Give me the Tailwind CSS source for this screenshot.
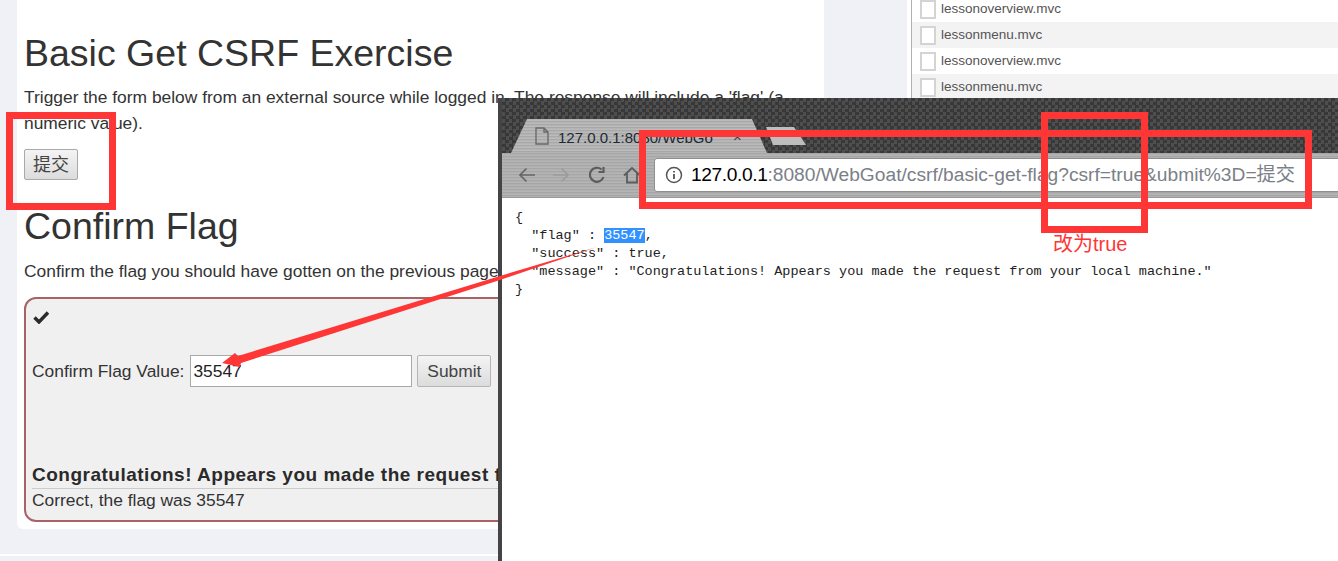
<!DOCTYPE html>
<html lang="en">
<head>
  <meta charset="UTF-8" />
  <title>Basic Get CSRF Exercise</title>
  <script src="https://cdn.jsdelivr.net/npm/@tailwindcss/browser@4"></script>
</head>
<body class="relative w-[1338px] h-[561px] overflow-hidden bg-[#eff1f7] text-[#333] font-['Liberation_Sans','Noto_Sans_CJK_SC',sans-serif]">

  <!-- lesson page -->
  <div class="h-[554px] pl-[17px] flex items-start">
    <main class="w-[807px] h-[529px] bg-white rounded-b-md pl-[7px] pt-[33px]">
      <h1 class="text-[37.5px] leading-[41px] font-normal">Basic Get CSRF Exercise</h1>
      <p class="mt-[10px] text-[17.4px] leading-[26px] w-[770px] text-[#333]">Trigger the form below from an external source while logged in. The response will include a 'flag' (a numeric value).</p>
      <button class="mt-[13px] block w-[54px] h-[31px] border border-[#a9a9a9] rounded-[2px] bg-gradient-to-b from-[#f4f4f4] to-[#dcdcdc] text-[18px] leading-none text-[#444]">提交</button>
      <h2 class="mt-[26px] text-[37.5px] leading-[41px] font-normal">Confirm Flag</h2>
      <p class="mt-[13px] text-[17.4px] leading-[22px] whitespace-nowrap">Confirm the flag you should have gotten on the previous page above.</p>
      <section class="mt-[15px] w-[776px] h-[225px] border-2 border-[#a96266] rounded-[12px] bg-[#f0f0f0] pl-[6px]">
        <svg class="mt-[11px] ml-[1px]" width="17" height="14" viewBox="0 0 17 14"><path d="M1.5 7.5 L6 12 L15 2.5" fill="none" stroke="#2a2a2a" stroke-width="3.4"/></svg>
        <div class="mt-[31px] flex items-center h-[32px]">
          <label class="text-[17.4px] whitespace-nowrap">Confirm Flag Value:</label>
          <input class="ml-[6px] w-[222px] h-[32px] border border-[#a9a9a9] bg-white px-[2px] text-[17.4px] text-[#222]" value="35547" />
          <button class="ml-[5px] w-[74px] h-[32px] border border-[#b5b5b5] rounded-[2px] bg-gradient-to-b from-[#f4f4f4] to-[#dcdcdc] text-[17.4px] text-[#444]">Submit</button>
        </div>
        <p class="mt-[77px] text-[19px] leading-[22px] font-bold tracking-[0.5px] text-[#2a2a2a] whitespace-nowrap">Congratulations! Appears you made the request from your local machine.</p>
        <p class="mt-[2px] border-t border-[#cccccc] text-[17.4px] leading-[23px]">Correct, the flag was 35547</p>
      </section>
    </main>

    <!-- devtools network list behind the browser -->
    <aside class="ml-[83px] pl-[4px] bg-white w-[431px] h-[98px]">
      <ul class="h-full border-l border-[#b0b0b0] text-[13.5px] text-[#555] overflow-hidden">
        <li class="-mt-[4px] h-[26px] pl-[8px] flex items-center gap-[5px] pt-[1px]"><span class="w-[16px] h-[19px] border-2 border-[#d4d4d4] bg-white"></span>lessonoverview.mvc</li>
        <li class="h-[26px] pl-[8px] flex items-center gap-[5px] pt-[1px] bg-[#f3f3f3]"><span class="w-[16px] h-[19px] border-2 border-[#d4d4d4] bg-white"></span>lessonmenu.mvc</li>
        <li class="h-[26px] pl-[8px] flex items-center gap-[5px] pt-[1px]"><span class="w-[16px] h-[19px] border-2 border-[#d4d4d4] bg-white"></span>lessonoverview.mvc</li>
        <li class="h-[26px] pl-[8px] flex items-center gap-[5px] pt-[1px] bg-[#f3f3f3]"><span class="w-[16px] h-[19px] border-2 border-[#d4d4d4] bg-white"></span>lessonmenu.mvc</li>
      </ul>
    </aside>
  </div>
  <div class="h-[2px] bg-white"></div>

  <!-- browser window on top -->
  <div class="absolute left-[498px] top-[98px] w-[840px] h-[463px] border-l-[4px] border-[#444] flex flex-col bg-white">
    <div class="relative h-[55px] shrink-0 bg-[repeating-conic-gradient(#383838_0_25%,#4e4e4e_0_50%)] bg-[length:7px_7px]">
      <div class="absolute left-[9px] top-[21px] w-[256px] h-[34px] [clip-path:polygon(16px_0,241px_0,100%_100%,0_100%)] bg-[repeating-linear-gradient(0deg,#b4b4b4_0_1px,#a8a8a8_1px_2px,#bababa_2px_3px)] text-[15px] text-[#1d2a33]">
        <svg class="absolute left-[24px] top-[8px]" width="14" height="18" viewBox="0 0 14 18"><path d="M1 1 H9 L13 5 V17 H1 Z M9 1 V5 H13" fill="none" stroke="#6a6a6a" stroke-width="1.4"/></svg>
        <span class="absolute left-[47px] top-[8px] whitespace-nowrap">127.0.0.1:8080/WebGo</span>
        <span class="absolute left-[222px] top-[7px] text-[#444]">×</span>
      </div>
      <div class="absolute left-[264px] top-[29px] w-[40px] h-[18px] [clip-path:polygon(0_0,28px_0,100%_100%,7px_100%)] bg-[#bdbdbd]"></div>
    </div>
    <div class="relative h-[45px] shrink-0 bg-[repeating-linear-gradient(0deg,#b0b0b0_0_1px,#a6a6a6_1px_2px,#b4b4b4_2px_3px)] border-b border-[#9a9a9a] flex items-center pl-[16px]">
      <svg class="shrink-0" width="17" height="16" viewBox="0 0 17 16" fill="none" stroke="#666" stroke-width="1.7"><path d="M17 8 H2 M8.5 1.5 L2 8 L8.5 14.5"/></svg>
      <svg class="ml-[18px] shrink-0" width="17" height="16" viewBox="0 0 17 16" fill="none" stroke="#9c9c9c" stroke-width="1.7"><path d="M0 8 H15 M8.5 1.5 L15 8 L8.5 14.5"/></svg>
      <svg class="ml-[18px] shrink-0" width="18" height="18" viewBox="0 0 18 18" fill="none" stroke="#5c5c5c" stroke-width="2.2"><path d="M15.5 11 A7 7 0 1 1 13.5 3.5 M15.5 1 V6 H10.5"/></svg>
      <svg class="ml-[17px] shrink-0" width="18" height="18" viewBox="0 0 18 18" fill="none" stroke="#5c5c5c" stroke-width="1.8"><path d="M1 9.5 L9 2 L17 9.5 M4 7.5 V16.5 H14 V7.5"/></svg>
      <div class="ml-[13px] w-[700px] shrink-0 h-[34px] bg-white rounded-l-[3px] border border-[#8f8f8f] flex items-center pl-[10px] text-[19.2px] whitespace-nowrap text-[#7b8087]">
        <svg class="shrink-0" width="18" height="18" viewBox="0 0 18 18" fill="none" stroke="#555"><circle cx="9" cy="9" r="7.5" stroke-width="1.5"/><path d="M9 8 V13 M9 5 V6.5" stroke-width="1.8"/></svg>
        <span class="ml-[8px] text-black tracking-[-0.4px]">127.0.0.1</span><span>:8080/WebGoat/csrf/basic-get-flag?csrf=true&amp;ubmit%3D=提交</span>
      </div>
    </div>
    <pre class="pl-[13px] pt-[11px] font-['Liberation_Mono','Noto_Sans_CJK_SC',monospace] text-[13.5px] leading-[18px] text-[#222]">{
  "flag" : <span class="bg-[#3390ff] text-white">35547</span>,
  "success" : true,
  "message" : "Congratulations! Appears you made the request from your local machine."
}</pre>
  </div>

  <!-- red annotations -->
  <div class="absolute left-[6px] top-[112px] w-[110px] h-[98px] border-[7px] border-[#ff3636]"></div>
  <div class="absolute left-[639px] top-[130px] w-[673px] h-[79px] border-[7px] border-[#ff3636]"></div>
  <div class="absolute left-[1041px] top-[112px] w-[107px] h-[121px] border-[7px] border-[#ff3636]"></div>
  <span class="absolute left-[1053px] top-[232px] text-[20px] leading-[24px] text-[#ff3636]">改为true</span>
  <svg class="absolute left-0 top-0" width="1338" height="561" viewBox="0 0 1338 561"><polygon points="597,247 500,276 238,356 235,353 222,363 240,367 241,363 500,280" fill="#ff3636"/></svg>
</body>
</html>
